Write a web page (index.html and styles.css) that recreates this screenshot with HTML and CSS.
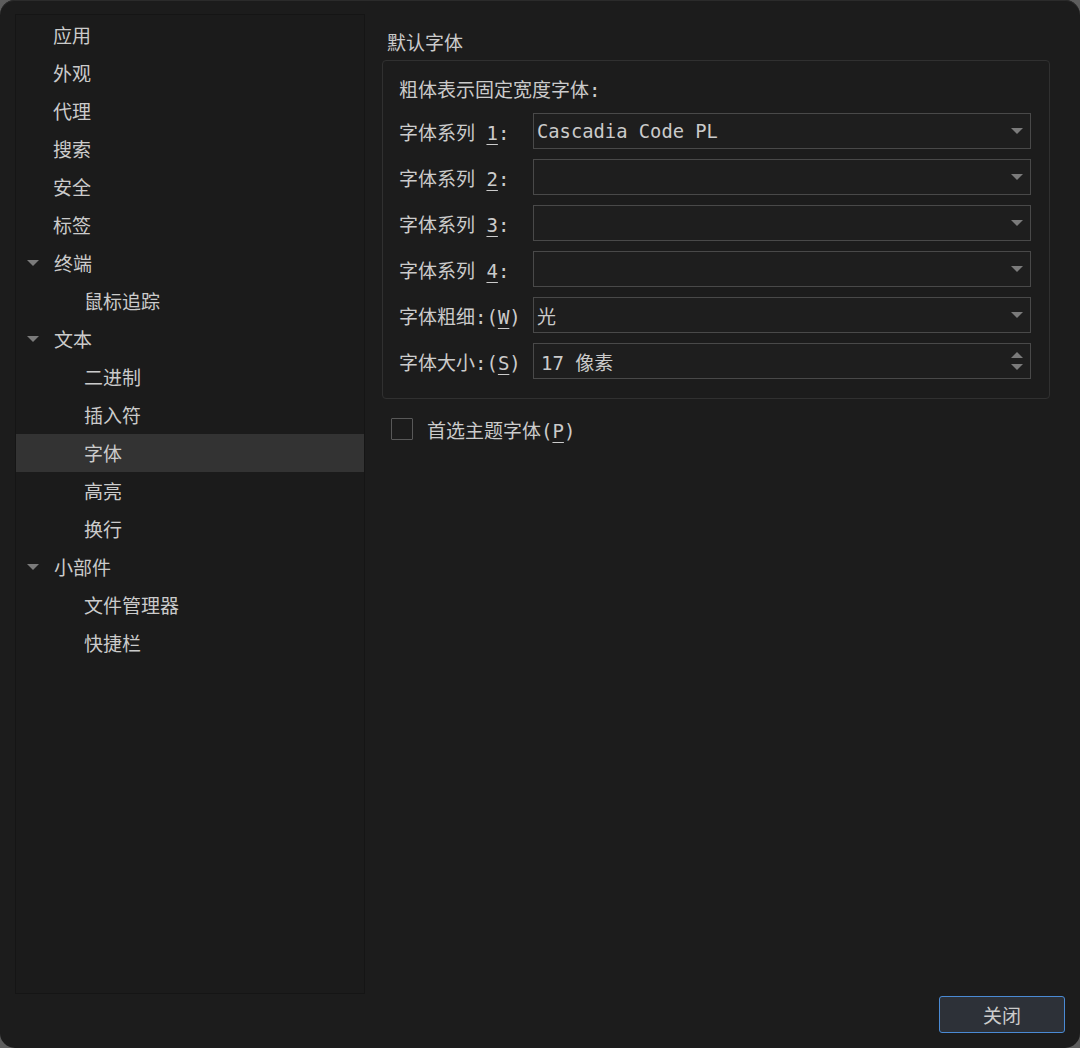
FILE: index.html
```html
<!DOCTYPE html>
<html lang="zh-CN">
<head>
  <meta charset="UTF-8">
  <meta name="viewport" content="width=device-width, initial-scale=1.0">
  <link rel="stylesheet" href="styles.css">
</head>
<body>
  <div class="window">
    <div class="main">

      <ul class="sidebar">
        <li class="item">应用</li>
        <li class="item">外观</li>
        <li class="item">代理</li>
        <li class="item">搜索</li>
        <li class="item">安全</li>
        <li class="item">标签</li>
        <li class="item group-head"><span class="arrow"></span>终端</li>
        <li class="item child">鼠标追踪</li>
        <li class="item group-head"><span class="arrow"></span>文本</li>
        <li class="item child">二进制</li>
        <li class="item child">插入符</li>
        <li class="item child selected">字体</li>
        <li class="item child">高亮</li>
        <li class="item child">换行</li>
        <li class="item group-head"><span class="arrow"></span>小部件</li>
        <li class="item child">文件管理器</li>
        <li class="item child">快捷栏</li>
      </ul>

      <div class="pane">
        <div class="pane-title">默认字体</div>

        <div class="groupbox">
          <div class="hint">粗体表示固定宽度字体:</div>

          <div class="form-row">
            <label class="field-label">字体系列 <u>1</u>:</label>
            <div class="combo"><span class="value mono">Cascadia Code PL</span><span class="drop"></span></div>
          </div>
          <div class="form-row">
            <label class="field-label">字体系列 <u>2</u>:</label>
            <div class="combo"><span class="value"></span><span class="drop"></span></div>
          </div>
          <div class="form-row">
            <label class="field-label">字体系列 <u>3</u>:</label>
            <div class="combo"><span class="value"></span><span class="drop"></span></div>
          </div>
          <div class="form-row">
            <label class="field-label">字体系列 <u>4</u>:</label>
            <div class="combo"><span class="value"></span><span class="drop"></span></div>
          </div>
          <div class="form-row">
            <label class="field-label">字体粗细:(<u>W</u>)</label>
            <div class="combo"><span class="value">光</span><span class="drop"></span></div>
          </div>
          <div class="form-row">
            <label class="field-label">字体大小:(<u>S</u>)</label>
            <div class="combo spin"><span class="value">17 像素</span>
              <span class="spin-arrows"><span class="up"></span><span class="down"></span></span>
            </div>
          </div>
        </div>

        <div class="check-row">
          <span class="checkbox"></span>
          <span class="check-label">首选主题字体(<u>P</u>)</span>
        </div>
      </div>

    </div>

    <div class="footer">
      <button class="btn">关闭</button>
    </div>
  </div>
</body>
</html>
```

FILE: styles.css
```css
:root {
  --window-bg: #1c1c1c;
  --text-color: #cbcbcb;
  --border-dark: #151515;
  --group-border: #303030;
  --field-border: #494949;
  --field-bg: #1e1e1e;
  --arrow-color: #7b7b7b;
  --select-bg: #333333;
  --accent: #4a8ad4;
}

html, body {
  margin: 0;
  padding: 0;
  background-color: #5d5d5d;
}

body {
  font-family: "DejaVu Sans Mono", "Noto Sans CJK SC", monospace;
  font-size: 19px;
  color: var(--text-color);
}

.window {
  width: 1080px;
  height: 1048px;
  box-sizing: border-box;
  background-color: var(--window-bg);
  border-radius: 15px;
  box-shadow: inset 0 1px 0 #2b2b2b;
  padding: 14px 15px 15px;
  display: flex;
  flex-direction: column;
  gap: 2px;
}

.main {
  flex: 1;
  display: flex;
  gap: 17px;
  min-height: 0;
}

/* left navigation tree */
.sidebar {
  list-style: none;
  margin: 0;
  padding: 1px 0 0;
  width: 350px;
  box-sizing: border-box;
  border: 1px solid var(--border-dark);
  background-color: #1b1b1b;
  font-family: "Noto Sans CJK SC", sans-serif;
}

.item {
  height: 38px;
  line-height: 38px;
  padding-left: 37px;
  display: flex;
  align-items: center;
  white-space: nowrap;
}

.item.group-head {
  padding-left: 10px;
}

.item.child {
  padding-left: 68px;
}

.item.selected {
  background-color: var(--select-bg);
}

.arrow {
  width: 0;
  height: 0;
  border-left: 6px solid transparent;
  border-right: 6px solid transparent;
  border-top: 6px solid var(--arrow-color);
  margin-right: 15px;
  margin-left: 1px;
}

/* right pane */
.pane {
  flex: 1;
  padding: 14px 15px 0 0;
}

.pane-title {
  line-height: 28px;
  padding-left: 5px;
  margin-bottom: 4px;
  font-family: "Noto Sans CJK SC", sans-serif;
}

.groupbox {
  border: 1px solid var(--group-border);
  border-radius: 4px;
  padding: 15px 18px 19px 16px;
  display: flex;
  flex-direction: column;
  gap: 10px;
}

.hint {
  line-height: 28px;
  margin-bottom: -1px;
}

.form-row {
  display: flex;
  align-items: center;
  height: 36px;
}

.field-label {
  width: 134px;
  flex: none;
  white-space: nowrap;
}

.field-label u,
.check-label u {
  text-underline-offset: 4px;
}

.combo {
  flex: 1;
  height: 36px;
  box-sizing: border-box;
  border: 1px solid var(--field-border);
  background-color: var(--field-bg);
  display: flex;
  align-items: center;
  padding: 0 7px 0 3px;
}

.combo .value {
  flex: 1;
  white-space: nowrap;
}

.combo .value.mono {
  font-family: "DejaVu Sans Mono", monospace;
  font-size: 18.8px;
}

.drop {
  width: 0;
  height: 0;
  border-left: 6px solid transparent;
  border-right: 6px solid transparent;
  border-top: 6px solid var(--arrow-color);
}

.combo.spin {
  padding-left: 7px;
}

.spin-arrows {
  display: flex;
  flex-direction: column;
  gap: 6px;
}

.spin-arrows .up {
  width: 0;
  height: 0;
  border-left: 6px solid transparent;
  border-right: 6px solid transparent;
  border-bottom: 6px solid var(--arrow-color);
}

.spin-arrows .down {
  width: 0;
  height: 0;
  border-left: 6px solid transparent;
  border-right: 6px solid transparent;
  border-top: 6px solid var(--arrow-color);
}

.check-row {
  display: flex;
  align-items: center;
  margin-top: 18px;
  padding-left: 9px;
  height: 24px;
}

.checkbox {
  width: 22px;
  height: 22px;
  box-sizing: border-box;
  border: 1px solid #585858;
  border-radius: 1px;
  margin-right: 14px;
}

/* bottom button row */
.footer {
  display: flex;
  justify-content: flex-end;
}

.btn {
  width: 126px;
  height: 37px;
  background-color: #2d3138;
  border: 1px solid var(--accent);
  border-radius: 3px;
  color: var(--text-color);
  font-family: "Noto Sans CJK SC", sans-serif;
  font-size: 19px;
  padding: 0;
  cursor: pointer;
}
```
